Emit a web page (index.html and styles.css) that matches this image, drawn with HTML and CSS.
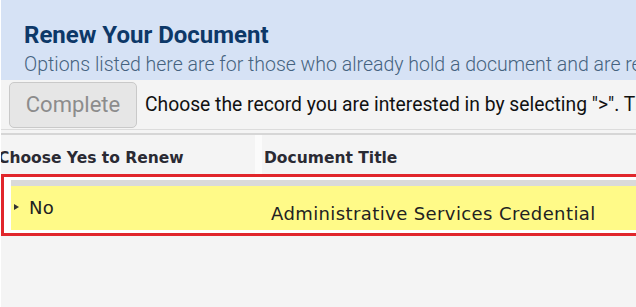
FILE: index.html
```html
<!DOCTYPE html>
<html>
<head>
  <meta charset="UTF-8">
  <title>Renew Your Document</title>
  <link rel="stylesheet" href="styles.css">
</head>
<body>
  <!-- Encabezado -->
  <div class="page-header">
    <h1>Renew Your Document</h1>
    <p class="subtitle">Options listed here are for those who already hold a document and are renewing it.</p>
  </div>

  <!-- Barra de acciones -->
  <div class="toolbar">
    <button class="btn-complete" disabled>Complete</button>
    <span class="toolbar-text">Choose the record you are interested in by selecting "&gt;". Then choose Yes.</span>
  </div>

  <!-- Tabla de documentos -->
  <div class="grid">
    <div class="grid-header">
      <div class="col-renew"><span class="shift">Choose Yes to Renew</span></div>
      <div class="col-divider"></div>
      <div class="col-title">Document Title</div>
    </div>
    <div class="row-selected">
      <div class="row-top"></div>
      <div class="row-body">
        <div class="cell-renew">
          <span class="expander"></span>
          <span>No</span>
        </div>
        <div class="cell-title">Administrative Services Credential</div>
      </div>
    </div>
  </div>
</body>
</html>
```

FILE: styles.css
```css
/* Colores */
:root {
  --header-bg: #d6e2f5;
  --navy: #0d3868;
  --sub: #45627f;
  --panel: #f4f4f4;
  --line: #dcdcdc;
  --red: #e1262b;
  --yellow: #fffa88;
}
/* Generales */
body {
  margin: 0;
  font-family: Roboto, "Liberation Sans", sans-serif;
  background: var(--panel);
  border-left: 1px solid #fff;
  overflow: hidden;
  height: 307px;
}
/* Encabezado */
.page-header {
  background: var(--header-bg);
  height: 80px;
  padding: 0 0 0 23px;
  box-sizing: border-box;
  overflow: hidden;
}
.page-header h1 {
  margin: 0;
  padding-top: 21px;
  font-size: 24px;
  font-weight: 700;
  color: var(--navy);
  line-height: 28px;
}
.subtitle {
  margin: 4px 0 0;
  font-size: 19.5px;
  font-weight: 300;
  color: var(--sub);
  white-space: nowrap;
  line-height: 24px;
}
/* Barra */
.toolbar {
  display: flex;
  align-items: center;
  gap: 8px;
  height: 49px;
  padding-left: 8px;
  border-bottom: 1px solid var(--line);
  white-space: nowrap;
  overflow: hidden;
}
.btn-complete {
  width: 128px;
  height: 46px;
  flex: none;
  background: #e6e6e6;
  border: 1px solid #c9c9c9;
  border-radius: 5px;
  font-family: Roboto, sans-serif;
  font-size: 22px;
  color: #8c8c8c;
  padding: 0;
}
.toolbar-text {
  font-size: 19.3px;
  color: #111;
}
/* Tabla */
.grid {
  margin-top: 3px;
  border-top: 2px solid #d6d6d6;
  font-family: "DejaVu Sans", Verdana, sans-serif;
}
.grid-header {
  display: flex;
  height: 39px;
  align-items: center;
  font-size: 15.5px;
  font-weight: 700;
  color: #2a2a33;
}
.col-renew {
  width: 254px;
  overflow: hidden;
  white-space: nowrap;
  padding-top: 6px;
}
.shift {
  display: inline-block;
  margin-left: -3px;
}
.col-divider {
  width: 7px;
  align-self: stretch;
  background: #fbfbfb;
}
.col-title {
  padding: 6px 0 0 2px;
  white-space: nowrap;
}
/* Fila seleccionada */
.row-selected {
  width: 660px;
  border: 3px solid var(--red);
  background: #fff;
  padding: 3px 0 3px 7px;
}
.row-top {
  height: 6px;
  background: #dadada;
}
.row-body {
  display: flex;
  height: 44px;
  background: var(--yellow);
  font-size: 18px;
  color: #222;
  letter-spacing: 0.4px;
}
.cell-renew {
  width: 260px;
  display: flex;
  align-items: center;
  gap: 10px;
  padding-left: 3px;
  padding-bottom: 2px;
  box-sizing: border-box;
}
.expander {
  width: 0;
  height: 0;
  border-top: 3px solid transparent;
  border-bottom: 3px solid transparent;
  border-left: 5px solid #333;
}
.cell-title {
  display: flex;
  align-items: center;
  padding-top: 10px;
  white-space: nowrap;
}
```
